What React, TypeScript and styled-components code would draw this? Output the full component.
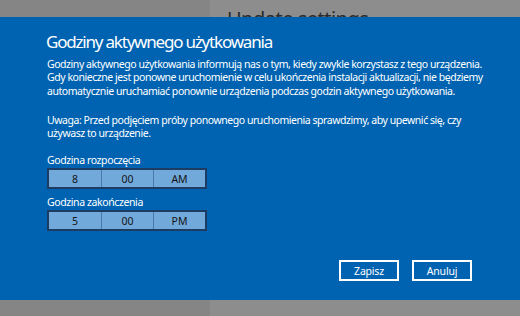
import React from 'react'
import styled, { createGlobalStyle } from 'styled-components'

const GlobalStyle = createGlobalStyle`
  html, body {
    margin: 0;
    padding: 0;
  }
  body {
    font-family: 'Noto Sans', 'Open Sans', sans-serif;
  }
`

const Screen = styled.div`
  position: relative;
  width: 520px;
  height: 316px;
  overflow: hidden;
  display: grid;
  grid-template-columns: 210px 1fr;
`

const Sidebar = styled.div`
  background: #858585;
`

const Main = styled.div`
  background: #8d8d8d;
  padding: 5px 0 0 17px;
`

const PageHeading = styled.div`
  font-size: 20px;
  font-weight: 400;
  letter-spacing: -0.5px;
  color: #2b2b2b;
`

const Dialog = styled.div`
  position: absolute;
  left: 0;
  right: 0;
  top: 17px;
  height: 283px;
  box-sizing: border-box;
  background: #0063b1;
  color: #fff;
  padding: 14px 48px 0 47px;
  display: flex;
  flex-direction: column;
`

const Title = styled.h1`
  margin: 0 0 5px -1px;
  font-size: 17px;
  font-weight: 400;
  letter-spacing: -1.2px;
  line-height: 22px;
  white-space: nowrap;
`

const Body = styled.div`
  display: flex;
  flex-direction: column;
  gap: 16px;
  margin-bottom: 14px;
`

const Text = styled.p`
  margin: 0;
  font-size: 10.5px;
  letter-spacing: -0.45px;
  line-height: 13.3px;
  white-space: nowrap;
`

const FieldLabel = styled.div`
  font-size: 10.5px;
  letter-spacing: -0.4px;
  line-height: 13px;
  margin: 0 0 1px;
`

const Picker = styled.div`
  display: grid;
  grid-template-columns: repeat(3, 1fr);
  width: 160px;
  height: 21px;
  box-sizing: border-box;
  border: 2px solid #1d3c63;
  background: #72a9db;
  margin-bottom: 7px;
`

const Segment = styled.div`
  display: flex;
  align-items: center;
  justify-content: center;
  font-size: 10.5px;
  color: #141414;
  & + & {
    border-left: 1px solid #4a7aa9;
  }
`

const Footer = styled.div`
  display: flex;
  justify-content: flex-end;
  gap: 13px;
  margin-top: 22px;
`

const Button = styled.button`
  width: 60px;
  height: 21px;
  box-sizing: border-box;
  border: 2px solid #fff;
  background: transparent;
  color: #fff;
  font-family: inherit;
  font-size: 10.5px;
  letter-spacing: -0.2px;
  padding: 0;
`

const TimePicker: React.FC<{ values: string[] }> = ({ values }) => (
  <Picker>
    {values.map(v => (
      <Segment key={v}>{v}</Segment>
    ))}
  </Picker>
)

export default function App() {
  return (
    <>
      <GlobalStyle />
      <Screen>
        <Sidebar />
        <Main>
          <PageHeading>Update settings</PageHeading>
        </Main>
        <Dialog>
          <Title>Godziny aktywnego użytkowania</Title>
          <Body>
            <Text>
              Godziny aktywnego użytkowania informują nas o tym, kiedy zwykle korzystasz z tego urządzenia.
              <br />
              Gdy konieczne jest ponowne uruchomienie w celu ukończenia instalacji aktualizacji, nie będziemy
              <br />
              automatycznie uruchamiać ponownie urządzenia podczas godzin aktywnego użytkowania.
            </Text>
            <Text>
              Uwaga: Przed podjęciem próby ponownego uruchomienia sprawdzimy, aby upewnić się, czy
              <br />
              używasz to urządzenie.
            </Text>
          </Body>
          <FieldLabel>Godzina rozpoczęcia</FieldLabel>
          <TimePicker values={['8', '00', 'AM']} />
          <FieldLabel>Godzina zakończenia</FieldLabel>
          <TimePicker values={['5', '00', 'PM']} />
          <Footer>
            <Button>Zapisz</Button>
            <Button>Anuluj</Button>
          </Footer>
        </Dialog>
      </Screen>
    </>
  )
}
